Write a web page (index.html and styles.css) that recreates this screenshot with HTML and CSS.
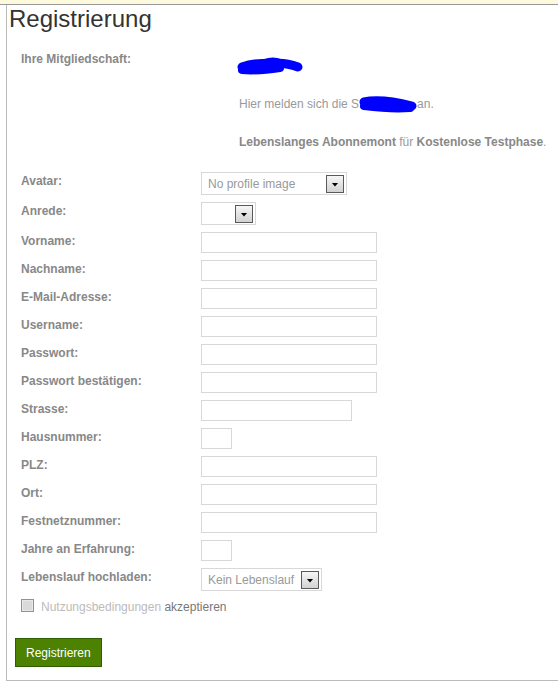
FILE: index.html
```html
<!DOCTYPE html>
<html lang="de">
<head>
  <meta charset="UTF-8">
  <meta name="viewport" content="width=device-width, initial-scale=1.0">
  <title>Registrierung</title>
  <link rel="stylesheet" href="styles.css">
</head>
<body>
  <div class="topbar"></div>
  <div class="page">
    <h1>Registrierung</h1>

    <div class="membership">
      <div class="label">Ihre Mitgliedschaft:</div>
      <div class="value">
        <svg class="scribble" width="68" height="18" viewBox="0 0 68 18">
          <path d="M6,10 C14,7 24,6 34,7 C44,5 54,7 62,10" />
          <path d="M6,13 C16,14 30,13 44,11" class="thin" />
          <path d="M28,5 C34,3 40,3 44,5" class="fine" />
        </svg>
        <p class="info">Hier melden sich die S<span class="redact"><svg width="60" height="17" viewBox="0 0 60 17">
          <path d="M6,6 C20,3 38,6 54,10" />
          <path d="M6,10 C22,12 38,13 52,12" class="thin" />
        </svg></span>an.</p>
        <p class="plan"><b>Lebenslanges Abonnemont</b> für <b>Kostenlose Testphase</b>.</p>
      </div>
    </div>

    <form class="form">
      <div class="row">
        <label>Avatar:</label>
        <div class="select w-avatar"><span>No profile image</span><span class="arrow"><i></i></span></div>
      </div>
      <div class="row">
        <label>Anrede:</label>
        <div class="select w-anrede"><span></span><span class="arrow"><i></i></span></div>
      </div>
      <div class="row"><label>Vorname:</label><input type="text"></div>
      <div class="row"><label>Nachname:</label><input type="text"></div>
      <div class="row"><label>E-Mail-Adresse:</label><input type="text"></div>
      <div class="row"><label>Username:</label><input type="text"></div>
      <div class="row"><label>Passwort:</label><input type="password"></div>
      <div class="row"><label>Passwort bestätigen:</label><input type="password"></div>
      <div class="row"><label>Strasse:</label><input type="text" class="mid"></div>
      <div class="row"><label>Hausnummer:</label><input type="text" class="short"></div>
      <div class="row"><label>PLZ:</label><input type="text"></div>
      <div class="row"><label>Ort:</label><input type="text"></div>
      <div class="row"><label>Festnetznummer:</label><input type="text"></div>
      <div class="row"><label>Jahre an Erfahrung:</label><input type="text" class="short"></div>
      <div class="row">
        <label>Lebenslauf hochladen:</label>
        <div class="select w-cv"><span>Kein Lebenslauf</span><span class="arrow"><i></i></span></div>
      </div>
      <div class="terms">
        <span class="checkbox"></span>
        <span class="terms-text"><span class="link">Nutzungsbedingungen</span> akzeptieren</span>
      </div>
      <button type="button" class="submit">Registrieren</button>
    </form>
  </div>
</body>
</html>
```

FILE: styles.css
```css
body { margin: 0; font-family: "Liberation Sans", Arial, sans-serif; font-size: 12px; color: #888; background: #fff; }
.topbar { height: 4px; background: #fdf9dc; border-bottom: 1px solid #999; }
.page { margin-left: 6px; border-left: 1px solid #bbb; border-bottom: 1px solid #bbb; padding-bottom: 13px; }
h1 { margin: 0; padding-left: 2px; font-size: 24px; font-weight: normal; line-height: 28px; color: #333; }

.membership { display: grid; grid-template-columns: 218px 1fr; margin-top: 19px; padding-left: 14px; }
.label { font-weight: bold; line-height: 14px; }
.scribble { display: block; margin: 5px 0 0 -3px; }
svg path { fill: none; stroke: #0000ff; stroke-width: 9; stroke-linecap: round; }
svg path.thin { stroke-width: 8; }
svg path.fine { stroke-width: 6; }
.info { margin: 22px 0 0; line-height: 14px; color: #999; }
.redact { display: inline-block; width: 58px; position: relative; }
.redact svg { position: absolute; left: -1px; top: -12px; }
.plan { margin: 24px 0 0; line-height: 14px; color: #999; }
.plan b { color: #888; }

.form { margin-top: 23px; padding-left: 14px; display: flex; flex-direction: column; gap: 7px; }
.row { display: grid; grid-template-columns: 180px auto; align-items: start; }
.row label { font-weight: bold; line-height: 14px; padding-top: 2px; }
.row input { box-sizing: border-box; width: 176px; height: 21px; margin: 0; padding: 0 4px; border: 1px solid #d8d8d8; font: inherit; color: #666; outline: none; }
.row input.mid { width: 151px; }
.row input.short { width: 31px; }

.select { box-sizing: border-box; height: 23px; display: flex; align-items: center; justify-content: space-between; gap: 4px; padding: 0 2px 0 6px; border: 1px solid #d8d8d8; color: #999; font-size: 12px; }
.w-avatar { width: 146px; }
.w-anrede { width: 55px; }
.w-cv { width: 121px; }
.arrow { box-sizing: border-box; width: 18px; height: 18px; border: 1px solid #5a5a5a; background: linear-gradient(#f6f6f6, #d2d2d2); display: flex; align-items: center; justify-content: center; }
.arrow i { display: block; width: 7px; height: 4px; margin-top: 2px; background: #000; clip-path: polygon(0 0, 100% 0, 50% 100%); }

.terms { display: flex; align-items: flex-start; gap: 7px; }
.checkbox { box-sizing: border-box; width: 13px; height: 13px; margin-top: 1px; border: 1px solid #929292; background: #dadada; box-shadow: inset 0 0 0 1px #e8e8e8; }
.terms-text { line-height: 14px; padding-top: 2px; color: #777; }
.terms-text .link { color: #bbb; }

.submit { align-self: flex-start; margin: 17px 0 0 -6px; height: 29px; padding: 0 10px; background: #4c8200; border: 1px solid #2e5c00; color: #fff; font: inherit; font-size: 12px; cursor: pointer; }
```
